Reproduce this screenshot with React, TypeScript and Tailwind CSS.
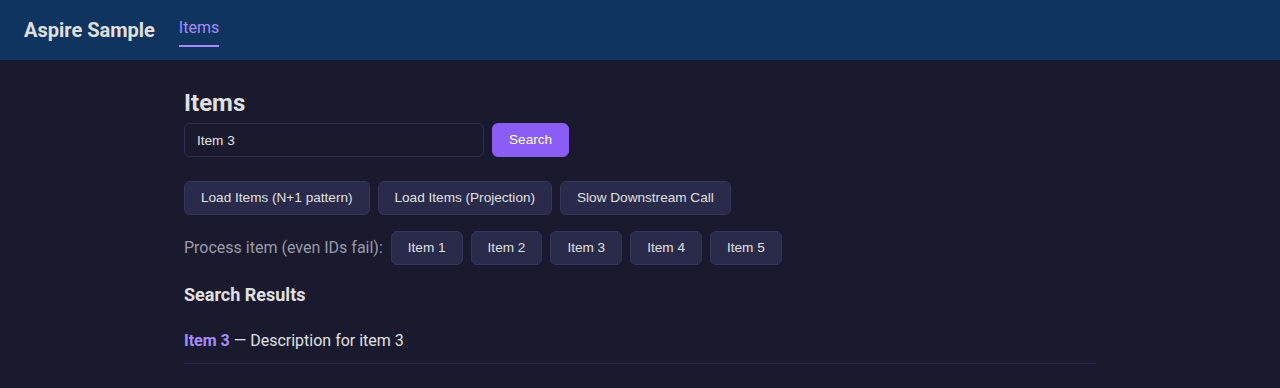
import * as React from "react"

const actions = ["Load Items (N+1 pattern)", "Load Items (Projection)", "Slow Downstream Call"]
const items = [1, 2, 3, 4, 5]

const btn =
  "h-[34px] px-4 rounded-md bg-[#2a2a4a] border border-[#34345a] whitespace-nowrap text-[13.6px] text-[#e0e0e0] font-['Liberation_Sans',Arial,sans-serif]"

export default function App() {
  return (
    <div className="min-h-[388px] bg-[#1a1a2e] text-[#e0e0e0] font-['Roboto',sans-serif]">
      <header className="h-[60px] bg-[#0f3460] flex items-center px-6 gap-6">
        <span className="text-[20px] font-bold text-[#e0e0e0]">Aspire Sample</span>
        <nav className="self-stretch flex items-start pt-[16px]">
          <a className="text-[16px] leading-[24px] text-[#a78bfa] border-b-2 border-[#a78bfa] pb-[5px]">Items</a>
        </nav>
      </header>

      <main className="max-w-[912px] mx-auto pt-[28px]">
        <h1 className="text-[24px] font-bold leading-[30px]">Items</h1>
        <div className="flex gap-2 mt-[5px]">
          <input
            defaultValue="Item 3"
            className="w-[300px] h-[34px] px-3 rounded-md bg-[#1a1a2e] border border-[#2e2e4e] text-[13.6px] text-[#e0e0e0] font-['Liberation_Sans',Arial,sans-serif] outline-none"
          />
          <button className="h-[34px] px-4 rounded-md bg-[#8b5cf6] border border-[#8b5cf6] text-[13.6px] text-white font-['Liberation_Sans',Arial,sans-serif]">
            Search
          </button>
        </div>

        <div className="flex gap-2 mt-6">
          {actions.map((a) => (
            <button key={a} className={btn}>
              {a}
            </button>
          ))}
        </div>

        <div className="flex items-center gap-2 mt-4">
          <span className="text-[16px] text-[#9a9aab]">Process item (even IDs fail):</span>
          {items.map((i) => (
            <button key={i} className={btn}>
              Item {i}
            </button>
          ))}
        </div>

        <h2 className="text-[18px] font-bold mt-[18px] leading-[24px]">Search Results</h2>
        <ul className="mt-[14px]">
          <li className="pt-2 pb-[10px] border-b border-[#26264a] text-[16px]">
            <span className="font-bold text-[#a78bfa]">Item 3</span> — Description for item 3
          </li>
        </ul>
      </main>
    </div>
  )
}
